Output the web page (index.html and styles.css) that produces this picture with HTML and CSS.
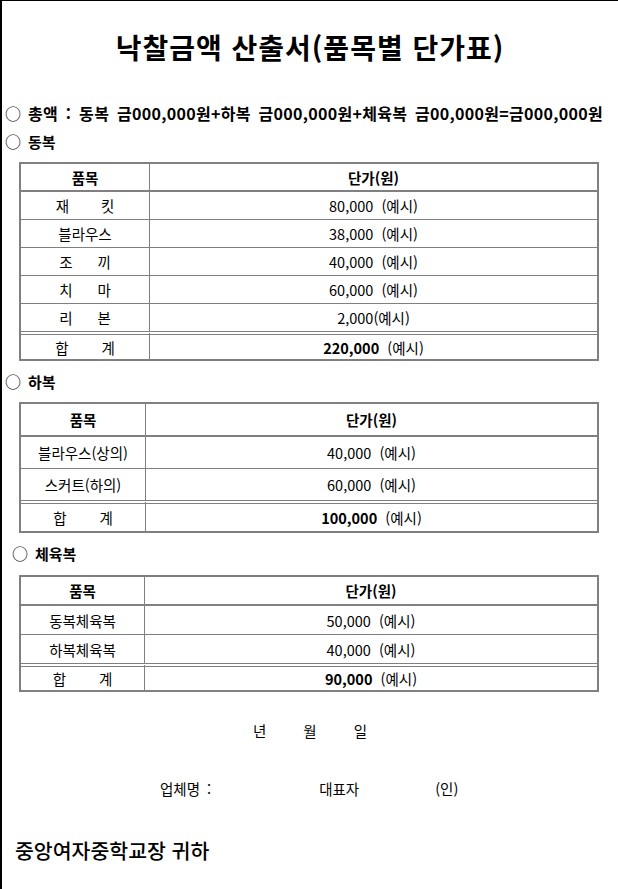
FILE: index.html
```html
<!DOCTYPE html>
<html lang="ko">
<head>
<meta charset="utf-8">
<link rel="stylesheet" href="styles.css">
</head>
<body>
<div class="page">
  <h1 class="title">낙찰금액 산출서(품목별 단가표)</h1>

  <p class="label total-line"><span class="circle">○</span>총액 : 동복 금000,000원+하복 금000,000원+체육복 금00,000원=금000,000원</p>
  <p class="label sec1"><span class="circle">○</span>동복</p>

  <table class="price t1">
    <colgroup><col class="c1a"><col></colgroup>
    <tr class="head"><th>품목</th><th>단가(원)</th></tr>
    <tr><td><span class="g32">재</span>킷</td><td>80,000 &nbsp;(예시)</td></tr>
    <tr><td>블라우스</td><td>38,000 &nbsp;(예시)</td></tr>
    <tr><td><span class="g25">조</span>끼</td><td>40,000 &nbsp;(예시)</td></tr>
    <tr><td><span class="g25">치</span>마</td><td>60,000 &nbsp;(예시)</td></tr>
    <tr class="last"><td><span class="g25">리</span>본</td><td>2,000(예시)</td></tr>
    <tr class="sum"><td><span class="g33">합</span>계</td><td><b>220,000</b> &nbsp;(예시)</td></tr>
  </table>

  <p class="label sec2"><span class="circle">○</span>하복</p>

  <table class="price t2">
    <colgroup><col class="c1b"><col></colgroup>
    <tr class="head"><th>품목</th><th>단가(원)</th></tr>
    <tr><td>블라우스(상의)</td><td>40,000 &nbsp;(예시)</td></tr>
    <tr class="last"><td>스커트(하의)</td><td>60,000 &nbsp;(예시)</td></tr>
    <tr class="sum"><td><span class="g33">합</span>계</td><td><b>100,000</b> &nbsp;(예시)</td></tr>
  </table>

  <p class="label sec3"><span class="circle">○</span>체육복</p>

  <table class="price t3">
    <colgroup><col class="c1c"><col></colgroup>
    <tr class="head"><th>품목</th><th>단가(원)</th></tr>
    <tr><td>동복체육복</td><td>50,000 &nbsp;(예시)</td></tr>
    <tr class="last"><td>하복체육복</td><td>40,000 &nbsp;(예시)</td></tr>
    <tr class="sum"><td><span class="g33">합</span>계</td><td><b>90,000</b> &nbsp;(예시)</td></tr>
  </table>

  <p class="date"><span class="dg">년</span><span class="dg">월</span><span>일</span></p>

  <p class="sign"><span class="s1">업체명 :</span><span class="s2">대표자</span><span class="s3">(인)</span></p>

  <p class="addressee">중앙여자중학교장 귀하</p>
</div>
</body>
</html>
```

FILE: styles.css
```css
html, body {
  margin: 0;
  padding: 0;
  background: #fff;
}

.page {
  box-sizing: border-box;
  width: 618px;
  height: 889px;
  border-left: 2px solid #000;
  border-top: 1px solid #000;
  font-family: "Noto Sans CJK KR", "Noto Sans", sans-serif;
  color: #000;
  overflow: hidden;
}

.title {
  margin: 0;
  padding-top: 27px;
  text-align: center;
  font-size: 28px;
  line-height: 38px;
  font-weight: 700;
  letter-spacing: 1px;
}

.label {
  margin: 0;
  font-size: 15px;
  line-height: 20px;
  font-weight: 700;
  white-space: nowrap;
}

.circle {
  display: inline-block;
  width: 23px;
  padding-left: 3px;
  font-weight: 400;
  font-size: 16px;
  letter-spacing: 0;
}

.total-line {
  margin-top: 37px;
  font-size: 16px;
  letter-spacing: 0.3px;
  word-spacing: 3px;
}

.sec1 {
  margin-top: 8px;
}

.sec2 {
  margin-top: 10px;
}

.sec3 {
  margin-top: 10px;
  padding-left: 7px;
}

.price {
  border-collapse: separate;
  border-spacing: 0;
  width: 580px;
  margin-left: 17px;
  border: 2px solid #808080;
  font-size: 14.5px;
  text-align: center;
}

.t1 { margin-top: 10px; }
.t2 { margin-top: 10px; }
.t3 { margin-top: 11px; }

.c1a { width: 129px; }
.c1b { width: 125px; }
.c1c { width: 124px; }

.price th,
.price td {
  padding: 0;
  font-weight: 400;
  border-bottom: 1px solid #808080;
}

.price th:first-child,
.price td:first-child {
  border-right: 1px solid #808080;
}

.price th {
  font-weight: 700;
  border-bottom-width: 2px;
}

.price .last td {
  border-bottom: none;
}

.price .sum td {
  border-bottom: none;
  border-top: 4px double #808080;
}

.price b {
  font-weight: 700;
}

.t1 th { height: 26px; }
.t1 td { height: 27px; }
.t1 .sum td { height: 24px; }

.t2 th { height: 31px; }
.t2 td { height: 31px; }
.t2 .sum td { height: 27px; }

.t3 th { height: 27px; }
.t3 td { height: 28px; }
.t3 .sum td { height: 23px; }

.g32 { margin-right: 32px; }
.g25 { margin-right: 25px; }
.g33 { margin-right: 33px; }

.date {
  margin: 29px 0 0;
  text-align: center;
  font-size: 14.5px;
  line-height: 20px;
}

.dg { margin-right: 37px; }

.sign {
  margin: 38px 0 0;
  font-size: 14.5px;
  line-height: 20px;
  white-space: nowrap;
}

.s1 { margin-left: 158px; word-spacing: 3px; }
.s2 { margin-left: 108px; }
.s3 { margin-left: 76px; }

.addressee {
  margin: 37px 0 0 13px;
  font-size: 20.5px;
  line-height: 28px;
  font-weight: 500;
}
```
